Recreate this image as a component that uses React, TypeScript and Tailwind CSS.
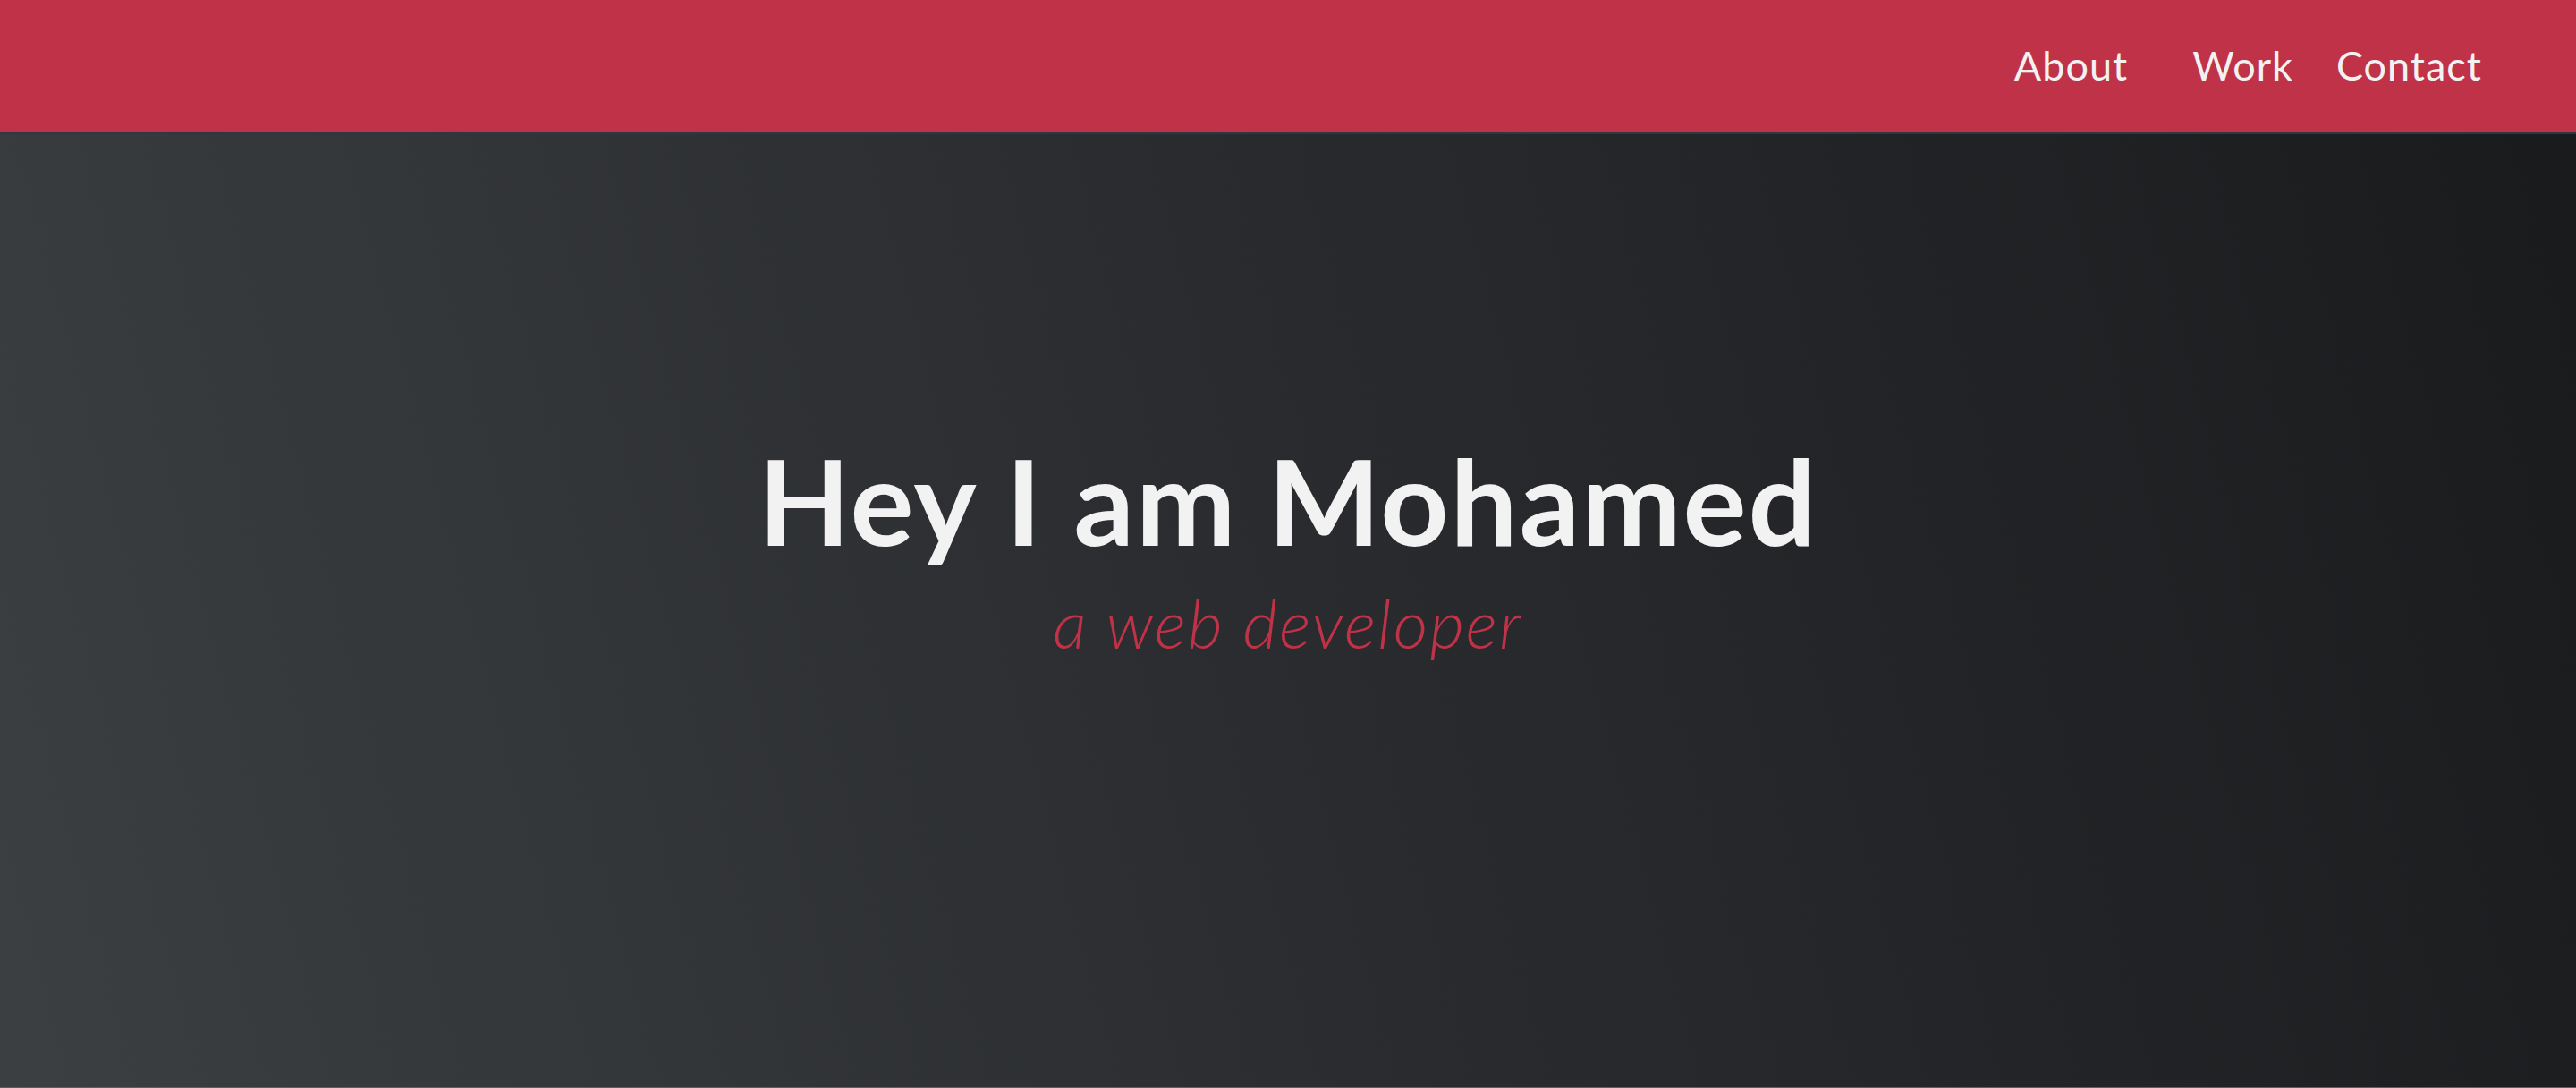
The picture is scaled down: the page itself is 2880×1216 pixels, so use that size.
import React from "react"

const NavBar: React.FC = () => {
    return (
        <nav className="h-[150px] bg-[#c03248] border-b-[3px] border-[#2f3740] flex items-center justify-end pr-[105px]">
            <ul
                className="flex items-center text-[#f2f2f2] text-[45px] font-normal tracking-[1px]"
                style={{ fontFamily: "Lato, 'Open Sans', sans-serif" }}
            >
                <li className="mr-[72px]"><a href="#about">About</a></li>
                <li className="mr-[48px]"><a href="#work">Work</a></li>
                <li><a href="#contact">Contact</a></li>
            </ul>
        </nav>
    )
}

const Hero: React.FC = () => {
    return (
        <section className="flex-1 flex flex-col items-center justify-center pb-[140px] bg-[linear-gradient(75deg,#3c3f42_0%,#2b2d30_45%,#1a1b1d_100%)]">
            <h1
                className="text-[#f2f2f2] text-[133px] font-bold leading-none tracking-[2px]"
                style={{ fontFamily: "Lato, 'Open Sans', sans-serif" }}
            >
                Hey I am Mohamed
            </h1>
            <p
                className="text-[#c03248] text-[75px] font-light italic leading-none mt-[34px] tracking-[2px]"
                style={{ fontFamily: "Lato, 'Open Sans', sans-serif" }}
            >
                a web developer
            </p>
        </section>
    )
}

const App: React.FC = () => {
    return (
        <div className="h-screen flex flex-col overflow-hidden">
            <NavBar />
            <Hero />
            <div className="h-px bg-[#c03248]" />
        </div>
    )
}

export default App
